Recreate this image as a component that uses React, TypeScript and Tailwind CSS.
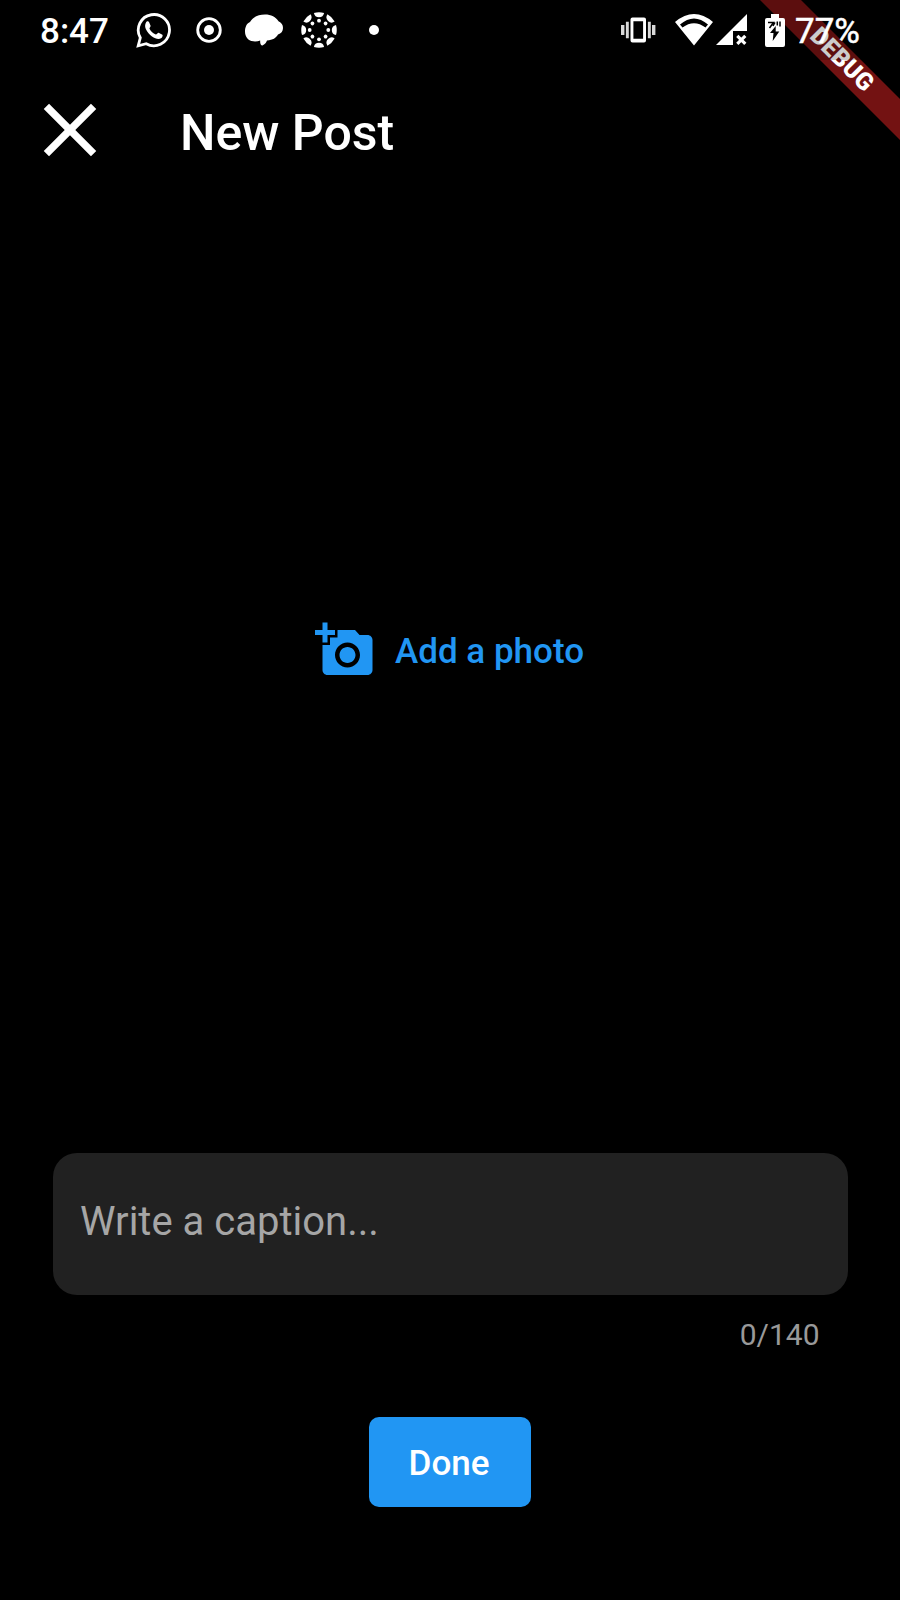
import { MdAddAPhoto, MdClose } from "react-icons/md";

function WhatsAppIcon() {
  return (
    <svg className="ml-[26px] size-9" viewBox="0 0 36 36" fill="none">
      <path
        d="M2.200 33.800L4.300 25.800A15.600 15.600 0 1 1 10.200 31.700Z"
        stroke="currentColor"
        strokeWidth="2.800"
      />
      <path
        d="M10 10.500C10.500 9.300 12.300 8.800 13 10L14.600 13.800C14.800 14.800 13.300 16 13.500 16.700C15 19.500 17 21.300 19.800 22.600C20.700 22.700 21.700 20.500 22.600 20.700L26.400 22.700C27.200 23.500 26 25.700 25 26.300C22.500 27.700 19 26.500 16 24.500C13.500 22.700 11.300 20 9.800 17C8.800 14.800 8.900 12.500 10 10.500Z"
        fill="currentColor"
      />
    </svg>
  );
}

function CanvasIcon() {
  const angles = [0, 45, 90, 135, 180, 225, 270, 315];
  return (
    <svg className="ml-[18px] size-9" viewBox="0 0 36 36" fill="currentColor">
      {angles.map((a) => (
        <g key={a} transform={`rotate(${a} 18 18)`}>
          <path d="M12.900 1A18 18 0 0 1 23.100 1A5.200 5.200 0 0 1 12.900 1Z" />
          <circle cx="18" cy="8.700" r="1.900" />
        </g>
      ))}
    </svg>
  );
}

function StatusBar() {
  return (
    <div className="relative z-20 flex h-[60px] items-center bg-black/20 pl-10 pr-10 text-white">
      <span className="w-[70px] pt-[3px] text-[35px] font-medium leading-[60px]">8:47</span>
      <WhatsAppIcon />
      <svg className="ml-[24px] size-[26px]" viewBox="0 0 26 26" fill="none">
        <circle cx="13" cy="13" r="11.300" stroke="currentColor" strokeWidth="2.800" />
        <circle cx="13" cy="13" r="5" fill="currentColor" />
      </svg>
      <svg className="ml-[23px] h-8 w-[38px]" viewBox="0 0 38 32" fill="currentColor">
        <path d="M0 17.500C0 13.500 1.500 9.500 5 8C8 3 13 .500 20 .500C26 .500 31 3 33.500 7.300C36.500 8.500 38 11 38 14C38 17.500 36 19.500 33 20.500C31 24 28 26 22 26.500C21 28.500 20.500 30 17.500 31.500C15.500 31.500 15 29 15.200 26.500C12.500 27.500 9.500 27.700 6.500 27C2.500 26 0 22 0 17.500Z" />
      </svg>
      <CanvasIcon />
      <span className="ml-8 size-[10px] rounded-full bg-white" />
      <div className="flex-1" />
      <svg className="h-[26px] w-[35px]" viewBox="0 0 35 26" fill="currentColor">
        <path opacity="0.85" d="M0 8h3.400v10H0zM4.900 4.800h2.900v16.400H4.900zM26.900 4.800h2.900v16.400h-2.900zM31 8h3.400v10H31z" />
        <path
          fillRule="evenodd"
          d="M11.500 .500h11.500a2 2 0 0 1 2 2v21a2 2 0 0 1-2 2H11.500a2 2 0 0 1-2-2V2.500a2 2 0 0 1 2-2zM12.400 4.300v17.400h9.700V4.300z"
        />
      </svg>
      <svg className="ml-[19px] h-8 w-[38px]" viewBox="0 0 38 32" fill="currentColor">
        <path
          fillRule="evenodd"
          d="M0 8Q19-8 38 8L19 31.500ZM5 10.500L7.500 13.500Q19 5 30.500 13.500L33 10.500Q19-1.500 5 10.500Z"
        />
      </svg>
      <svg className="ml-[3px] h-8 w-8" viewBox="0 0 32 32">
        <path d="M31 0V17H17V31H0Z" fill="currentColor" />
        <path d="M21.300 21.800l8 8M29.300 21.800l-8 8" stroke="currentColor" strokeWidth="3.200" />
      </svg>
      <svg className="ml-[17px] h-[33px] w-5" viewBox="0 0 20 33" fill="currentColor">
        <path d="M6 0h8v4h4q2 0 2 2v25q0 2-2 2H2q-2 0-2-2V6q0-2 2-2h4z" />
        <path d="M10.700 12L5 19h3.500l-.800 8L14.300 17.500h-3.600z" fill="#000" />
        <path d="M3 8.500h5.500L4.500 14M10 8.500L8 12M12.300 7.500v4M15 7.500v5" stroke="#000" strokeWidth="1.500" fill="none" />
      </svg>
      <span className="ml-[10px] w-[65px] whitespace-nowrap pt-[3px] text-[35px] leading-[60px] [-webkit-text-stroke:0.500px_white]">
        77%
      </span>
    </div>
  );
}

function DebugBanner() {
  return (
    <div className="absolute right-0 top-0 z-10 size-[150px] overflow-hidden">
      <div className="absolute -right-[100px] top-[70px] flex h-[29px] w-[200px] origin-[100px_-70px] rotate-45 items-center justify-center bg-[#731212] pl-[2px] text-[24.500px] font-black leading-none text-white">
        <span className="-mt-[2px]">DEBUG</span>
      </div>
    </div>
  );
}

export default function App() {
  return (
    <div className="relative flex h-[1600px] w-[900px] flex-col overflow-hidden bg-black font-['Roboto',sans-serif]">
      <StatusBar />
      <DebugBanner />
      <header className="flex h-[140px] items-center pl-[25px] text-white">
        <button aria-label="Close" className="flex size-[90px]">
          <MdClose className="size-[90px]" />
        </button>
        <h1 className="ml-[65px] pt-[5px] text-[50px] font-medium leading-none">New Post</h1>
      </header>
      <main className="flex flex-1 flex-col">
        <div className="flex h-[900px] items-center justify-center">
          <button className="flex items-center gap-5 pr-px text-[35px] font-medium leading-none text-[#2196f3]">
            <MdAddAPhoto className="size-[60px]" />
            <span className="pt-[2px]">Add a photo</span>
          </button>
        </div>
        <div className="mx-[52.500px] mt-[52.500px] flex h-[142.500px] items-center rounded-[24px] bg-[#212121] px-[27.500px]">
          <span className="pb-1 text-[40px] leading-none text-[#a6a6a6]">Write a caption...</span>
        </div>
        <span className="mr-[80.500px] mt-[20px] self-end text-[30px] leading-[40px] text-[#999999]">0/140</span>
        <button className="mt-[62px] h-[90px] w-[162px] self-center rounded-[10px] bg-[#2196f3] pr-[2px] pt-[4px] text-[35px] font-medium text-white">
          Done
        </button>
      </main>
    </div>
  );
}
